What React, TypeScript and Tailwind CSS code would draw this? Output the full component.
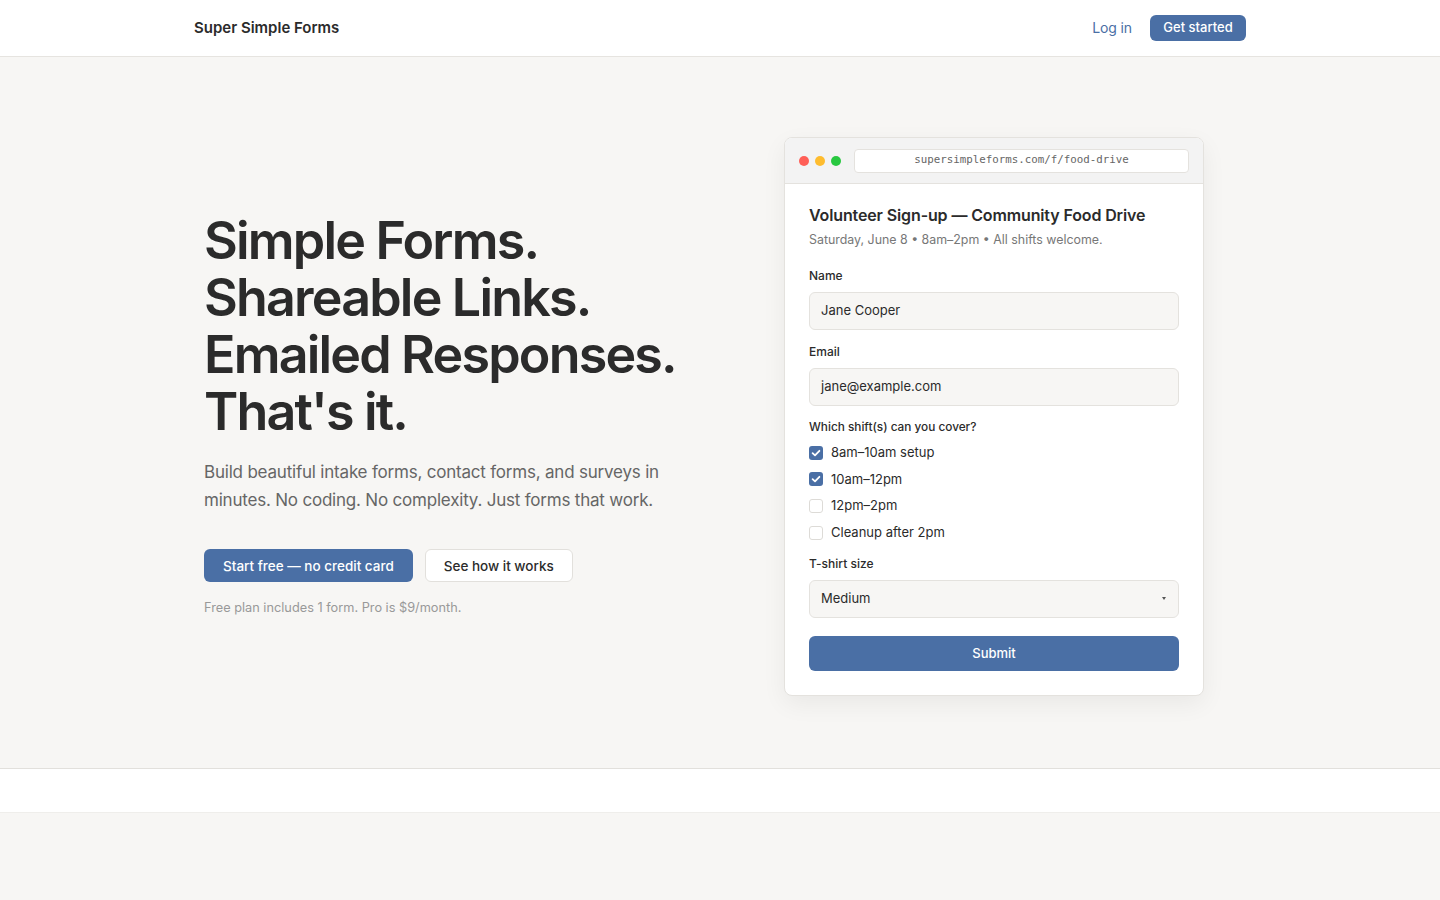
import React from "react";

const Check = () => (
  <svg viewBox="0 0 14 14" className="h-[14px] w-[14px]">
    <rect x="0" y="0" width="14" height="14" rx="3" fill="#4a6fa5" />
    <path d="M3.6 7.2 L6 9.4 L10.4 4.8" stroke="white" strokeWidth="1.8" fill="none" strokeLinecap="round" strokeLinejoin="round" />
  </svg>
);

const Box = () => <span className="block h-[14px] w-[14px] rounded-[3px] border border-[#dddbd7] bg-white" />;

function CheckRow({ checked, label }: { checked?: boolean; label: string }) {
  return (
    <div className="flex h-[26.67px] items-center gap-2">
      {checked ? <Check /> : <Box />}
      <span className="text-[13px] text-[#2b2b2b]">{label}</span>
    </div>
  );
}

export default function App() {
  return (
    <div className="min-h-screen bg-[#f7f6f4] text-[#2b2b2b]" style={{ fontFamily: "Inter, 'Noto Sans', sans-serif" }}>
      <header className="h-[57px] border-b border-[#e6e4e0] bg-white">
        <div className="mx-auto flex h-14 max-w-6xl items-center justify-between px-[50px]">
          <span className="text-[15px] font-semibold text-[#2b2b2b]">Super Simple Forms</span>
          <div className="flex items-center gap-[18px]">
            <span className="pb-[1px] text-[14px] tracking-[-0.01em] text-[#4a6fa5]">Log in</span>
            <span className="flex h-[26px] w-[96px] items-center justify-center rounded-md bg-[#4a6fa5] text-[13px] font-medium text-white">Get started</span>
          </div>
        </div>
      </header>

      <section className="border-b border-[#e2e0dc] pt-20 pb-[72px]">
        <div className="mx-auto grid max-w-[1032px] grid-cols-2 items-center gap-16">
          <div className="pb-[3px]">
            <h1 className="text-[52px] font-semibold leading-[57px] tracking-[-0.035em] text-[#2b2b2b]">
              Simple Forms.
              <br />
              Shareable Links.
              <br />
              Emailed Responses.
              <br />
              That's it.
            </h1>
            <p className="mt-[18px] text-[17px] leading-[28px] tracking-[-0.012em] text-[#666]">
              Build beautiful intake forms, contact forms, and surveys in minutes. No coding. No complexity. Just forms that work.
            </p>
            <div className="mt-[35px] flex gap-3">
              <span className="flex h-[33px] items-center rounded-md bg-[#4a6fa5] px-[19px] text-[13.5px] font-medium text-white">
                Start free — no credit card
              </span>
              <span className="flex h-[33px] items-center rounded-md border border-[#e2e0dc] bg-white px-[18px] text-[13.5px] font-medium text-[#2b2b2b]">
                See how it works
              </span>
            </div>
            <p className="mt-[16px] text-[12.75px] text-[#999]">Free plan includes 1 form. Pro is $9/month.</p>
          </div>

          <div className="flex justify-center">
            <div className="w-[420px] overflow-hidden rounded-lg border border-[#e4e2de] bg-white shadow-[0_8px_24px_rgba(0,0,0,0.06)]">
              <div className="flex h-[46px] items-center gap-[6px] border-b border-[#e4e2de] bg-[#f3f3f3] px-[14px]">
                <span className="h-[10px] w-[10px] rounded-full bg-[#ff5f57]" />
                <span className="h-[10px] w-[10px] rounded-full bg-[#febc2e]" />
                <span className="h-[10px] w-[10px] rounded-full bg-[#28c840]" />
                <div
                  className="ml-[7px] flex h-[24px] flex-1 items-center justify-center rounded border border-[#e4e2de] bg-white text-[10.8px] text-[#666]"
                  style={{ fontFamily: "'DejaVu Sans Mono', monospace" }}
                >
                  supersimpleforms.com/f/food-drive
                </div>
              </div>
              <div className="px-6 pt-[19px] pb-6">
                <h2 className="text-[16px] font-semibold leading-6 tracking-[-0.008em] text-[#2b2b2b]">Volunteer Sign-up — Community Food Drive</h2>
                <p className="mt-[4px] text-[12.4px] text-[#777]">Saturday, June 8 • 8am–2pm • All shifts welcome.</p>

                <div className="mt-[17px] text-[12px] font-medium text-[#2b2b2b]">Name</div>
                <div className="mt-[7px] flex h-[38px] items-center rounded-md border border-[#e4e2de] bg-[#f7f6f4] px-[11px] text-[13px] text-[#2b2b2b]">
                  Jane Cooper
                </div>

                <div className="mt-[13px] text-[12px] font-medium text-[#2b2b2b]">Email</div>
                <div className="mt-[7px] flex h-[38px] items-center rounded-md border border-[#e4e2de] bg-[#f7f6f4] px-[11px] text-[13px] text-[#2b2b2b]">
                  jane@example.com
                </div>

                <div className="mt-[13px] text-[11.8px] font-medium text-[#2b2b2b]">Which shift(s) can you cover?</div>
                <div className="mt-[3px] flex flex-col">
                  <CheckRow checked label="8am–10am setup" />
                  <CheckRow checked label="10am–12pm" />
                  <CheckRow label="12pm–2pm" />
                  <CheckRow label="Cleanup after 2pm" />
                </div>

                <div className="mt-[9px] text-[12px] font-medium text-[#2b2b2b]">T-shirt size</div>
                <div className="mt-[7px] flex h-[38px] items-center justify-between rounded-md border border-[#e4e2de] bg-[#f7f6f4] px-[11px] text-[13px] text-[#2b2b2b]">
                  <span>Medium</span>
                  <svg viewBox="0 0 4 3" className="mr-[1px] h-[3px] w-[4px]">
                    <path d="M0 0 L4 0 L2 3 Z" fill="#555" />
                  </svg>
                </div>

                <div className="mt-[18px] flex h-[35px] items-center justify-center rounded-md bg-[#4a6fa5] text-[13px] font-medium text-white">
                  Submit
                </div>
              </div>
            </div>
          </div>
        </div>
      </section>
      <div className="h-[44px] border-b border-[#efeeeb] bg-white" />
    </div>
  );
}
